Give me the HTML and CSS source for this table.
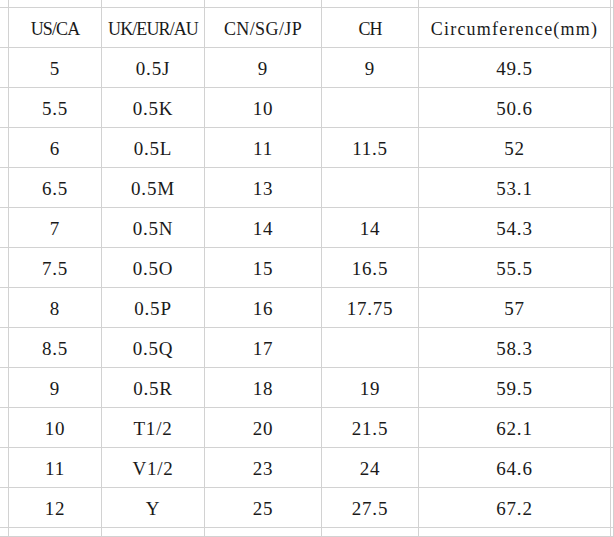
FILE: index.html
```html
<!DOCTYPE html>
<html>
<head>
<meta charset="utf-8">
<link rel="stylesheet" href="styles.css">
</head>
<body>
<div class="sheet">
  <div class="c"></div><div class="c"></div><div class="c"></div><div class="c"></div><div class="c"></div><div class="c"></div><div class="c"></div>

  <div class="c"></div><div class="c t h tight">US/CA</div><div class="c t h tight">UK/EUR/AU</div><div class="c t h">CN/SG/JP</div><div class="c t h tight">CH</div><div class="c t h loose">Circumference(mm)</div><div class="c"></div>
  <div class="c"></div><div class="c t">5</div><div class="c t">0.5J</div><div class="c t">9</div><div class="c t">9</div><div class="c t">49.5</div><div class="c"></div>
  <div class="c"></div><div class="c t">5.5</div><div class="c t">0.5K</div><div class="c t">10</div><div class="c t"></div><div class="c t">50.6</div><div class="c"></div>
  <div class="c"></div><div class="c t">6</div><div class="c t">0.5L</div><div class="c t">11</div><div class="c t">11.5</div><div class="c t">52</div><div class="c"></div>
  <div class="c"></div><div class="c t">6.5</div><div class="c t">0.5M</div><div class="c t">13</div><div class="c t"></div><div class="c t">53.1</div><div class="c"></div>
  <div class="c"></div><div class="c t">7</div><div class="c t">0.5N</div><div class="c t">14</div><div class="c t">14</div><div class="c t">54.3</div><div class="c"></div>
  <div class="c"></div><div class="c t">7.5</div><div class="c t">0.5O</div><div class="c t">15</div><div class="c t">16.5</div><div class="c t">55.5</div><div class="c"></div>
  <div class="c"></div><div class="c t">8</div><div class="c t">0.5P</div><div class="c t">16</div><div class="c t">17.75</div><div class="c t">57</div><div class="c"></div>
  <div class="c"></div><div class="c t">8.5</div><div class="c t">0.5Q</div><div class="c t">17</div><div class="c t"></div><div class="c t">58.3</div><div class="c"></div>
  <div class="c"></div><div class="c t">9</div><div class="c t">0.5R</div><div class="c t">18</div><div class="c t">19</div><div class="c t">59.5</div><div class="c"></div>
  <div class="c"></div><div class="c t">10</div><div class="c t">T1/2</div><div class="c t">20</div><div class="c t">21.5</div><div class="c t">62.1</div><div class="c"></div>
  <div class="c"></div><div class="c t">11</div><div class="c t">V1/2</div><div class="c t">23</div><div class="c t">24</div><div class="c t">64.6</div><div class="c"></div>
  <div class="c"></div><div class="c t">12</div><div class="c t">Y</div><div class="c t">25</div><div class="c t">27.5</div><div class="c t">67.2</div><div class="c"></div>

  <div class="c"></div><div class="c"></div><div class="c"></div><div class="c"></div><div class="c"></div><div class="c"></div><div class="c"></div>
</div>
</body>
</html>
```
FILE: styles.css
```css
html, body {
  margin: 0;
  padding: 0;
  background: #ffffff;
}
body {
  width: 614px;
  height: 537px;
  overflow: hidden;
}
.sheet {
  display: grid;
  grid-template-columns: 9px 93px 103px 117px 97px 192px 1fr;
  grid-template-rows: 8px repeat(13, 40px) 1fr;
  width: 614px;
  height: 537px;
  font-family: "Liberation Serif", "DejaVu Serif", serif;
  font-size: 19px;
  letter-spacing: 0.8px;
  color: #1a1a1a;
}
.c {
  box-sizing: border-box;
  border-right: 1px solid #d2d2d2;
  border-bottom: 1px solid #d2d2d2;
}
.t {
  display: flex;
  align-items: center;
  justify-content: center;
  padding-top: 3px;
  white-space: nowrap;
}
.h {
  font-size: 18px;
  letter-spacing: 0.4px;
}
.h.tight {
  letter-spacing: -0.9px;
}
.h.loose {
  letter-spacing: 1.2px;
}
```
